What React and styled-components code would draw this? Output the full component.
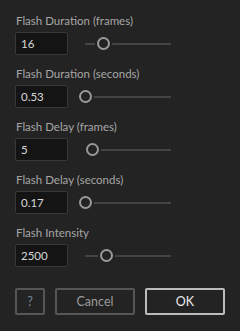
import React from "react";
import styled, { createGlobalStyle } from "styled-components";

const Global = createGlobalStyle`
  html, body { margin: 0; padding: 0; background: #232323; }
  body { font-family: Lato, "Open Sans", sans-serif; }
`;

const Panel = styled.div`
  width: 240px;
  height: 331px;
  box-sizing: border-box;
  padding: 14px 15px 0 15px;
  background: #232323;
  display: flex;
  flex-direction: column;
`;

const Field = styled.div`
  display: flex;
  flex-direction: column;
  gap: 4px;
  margin-bottom: 12px;
`;

const Label = styled.div`
  font-size: 11.5px;
  line-height: 14px;
  color: #a6a6a6;
  padding-left: 1px;
  white-space: nowrap;
`;

const Row = styled.div`
  display: flex;
  align-items: center;
`;

const Input = styled.div`
  box-sizing: border-box;
  width: 53px;
  height: 23px;
  background: #141414;
  border: 1px solid #383838;
  border-radius: 2px;
  color: #d8d8d8;
  font-size: 11.5px;
  line-height: 21px;
  padding-left: 5px;
`;

const Slider = styled.div`
  position: relative;
  margin-left: 17px;
  width: 86px;
  height: 14px;
  display: flex;
  align-items: center;
`;

const Track = styled.div`
  width: 100%;
  height: 2px;
  background: #444444;
`;

const Knob = styled.div`
  position: absolute;
  top: 0.5px;
  width: 13px;
  height: 13px;
  box-sizing: border-box;
  border-radius: 50%;
  border: 2px solid #999999;
  background: #232323;
  box-shadow: 0 0 0 2px #232323;
`;

const Buttons = styled.div`
  display: flex;
  gap: 10px;
  margin-top: 9px;
`;

const Button = styled.div`
  box-sizing: border-box;
  width: ${(p) => p.$w}px;
  height: 27px;
  border: 2px solid ${(p) => (p.$primary ? "#bcbcbc" : "#565656")};
  border-radius: 2px;
  color: ${(p) => p.$color};
  font-size: 12.5px;
  display: flex;
  align-items: center;
  justify-content: center;
`;

const fields = [
  { label: "Flash Duration (frames)", value: "16", pos: 0.215 },
  { label: "Flash Duration (seconds)", value: "0.53", pos: 0 },
  { label: "Flash Delay (frames)", value: "5", pos: 0.085 },
  { label: "Flash Delay (seconds)", value: "0.17", pos: 0 },
  { label: "Flash Intensity", value: "2500", pos: 0.25 },
];

export default function App() {
  return (
    <>
      <Global />
      <Panel>
        {fields.map((f) => (
          <Field key={f.label}>
            <Label>{f.label}</Label>
            <Row>
              <Input>{f.value}</Input>
              <Slider>
                <Track />
                <Knob style={{ left: `${f.pos * 86 - 6.5}px` }} />
              </Slider>
            </Row>
          </Field>
        ))}
        <Buttons>
          <Button $w={30} $color="#74879a">?</Button>
          <Button $w={80} $color="#9a9a9a">Cancel</Button>
          <Button $w={80} $primary $color="#ececec">OK</Button>
        </Buttons>
      </Panel>
    </>
  );
}
